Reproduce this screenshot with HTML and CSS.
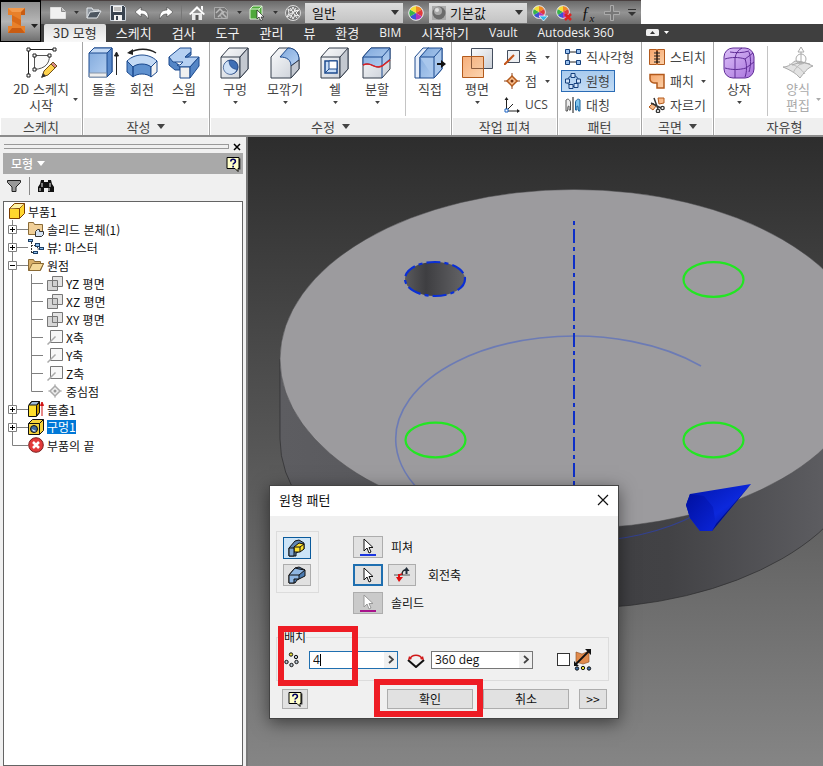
FILE: index.html
```html
<!DOCTYPE html>
<html lang="ko">
<head>
<meta charset="utf-8">
<title>부품1</title>
<link rel="stylesheet" href="styles.css">
</head>
<body>
<svg class="defs" aria-hidden="true">
  <defs>
    <linearGradient id="blue" x1="0" y1="0" x2="1" y2="1"><stop offset="0" stop-color="#7fa8dc"/><stop offset="1" stop-color="#b9d3f3"/></linearGradient>
    <linearGradient id="grey" x1="0" y1="0" x2="1" y2="1"><stop offset="0" stop-color="#fafbfc"/><stop offset="1" stop-color="#c9ced6"/></linearGradient>
    <linearGradient id="orange" x1="0" y1="0" x2="1" y2="1"><stop offset="0" stop-color="#f6a66c"/><stop offset="1" stop-color="#fbd0a8"/></linearGradient>
    <linearGradient id="purple" x1="0" y1="0" x2="1" y2="1"><stop offset="0" stop-color="#dcc0f8"/><stop offset="1" stop-color="#a872dc"/></linearGradient>
    <symbol id="caret" viewBox="0 0 8 5"><path d="M0 0h8L4 5z" fill="currentColor"/></symbol>
    <symbol id="wheel" viewBox="0 0 16 16">
      <circle cx="8" cy="8" r="7.500" fill="#eee"/>
      <path d="M8 8V1A7 7 0 0 1 14 4.500z" fill="#f08a24"/><path d="M8 8l6-3.500a7 7 0 0 1 0 7z" fill="#e03a3a"/><path d="M8 8l6 3.500A7 7 0 0 1 8 15z" fill="#b336b8"/><path d="M8 8v7a7 7 0 0 1-6-3.500z" fill="#3d55d6"/><path d="M8 8l-6 3.500a7 7 0 0 1 0-7z" fill="#39b54a"/><path d="M8 8L2 4.500A7 7 0 0 1 8 1z" fill="#f3df3a"/>
      <circle cx="8" cy="8" r="7.300" fill="none" stroke="#ddd"/>
    </symbol>
    <symbol id="help" viewBox="0 0 16 16"><path d="M2 1.500h12v11h-1v3l-3-3H2z" fill="#ffffc8" stroke="#000"/><path d="M14.800 2.500v11" stroke="#000"/><path d="M5.800 5.500c0-3 4.600-3 4.600 0 0 1.600-2.300 1.600-2.300 3M8.100 9.800v1.700" fill="none" stroke="#000060" stroke-width="1.600"/></symbol>
    <symbol id="cursor" viewBox="0 0 12 16"><path d="M2 1v12l3-3 2 5 2-1-2-4.500h4z" fill="#fff" stroke="currentColor"/></symbol>
    <symbol id="plane" viewBox="0 0 16 16"><path d="M5.500 1.500h10v10h-10z" fill="#e4e4e4" stroke="#777"/><path d="M.5 5.500h10v10H.5z" fill="#ccc" fill-opacity=".8" stroke="#777"/><path d="M5.500 5v6.500H11" fill="none" stroke="#777"/></symbol>
    <symbol id="axis" viewBox="0 0 16 16"><path d="M3.500 1.500h12v12h-12z" fill="#f7f7f7" stroke="#777"/><path d="M.5 15.500l8-8" stroke="#aaa" stroke-width="1.500"/></symbol>
    <symbol id="folder" viewBox="0 0 16 16"><path d="M.5 13.500v-11h5l1 2h6v2h3l-3 7z" fill="#d9b06a" stroke="#8a6a35"/><path d="M.8 13.500l3.500-7h11.200l-3.500 7z" fill="#f4d898" stroke="#8a6a35"/></symbol>
    <symbol id="plus" viewBox="0 0 24 18"><path d="M8.500 0v18M8 9.500h16" stroke="#808080"/><path d="M4.500 5.500h8v8h-8z" fill="#fff" stroke="#808080"/><path d="M6 9.500h5M8.500 7v5" stroke="#000"/></symbol>
    <symbol id="minus" viewBox="0 0 24 18"><path d="M8.500 0v18M8 9.500h16" stroke="#808080"/><path d="M4.500 5.500h8v8h-8z" fill="#fff" stroke="#808080"/><path d="M6 9.500h5" stroke="#000"/></symbol>
    <symbol id="last" viewBox="0 0 24 18"><path d="M8.500 0v9.500H24" fill="none" stroke="#808080"/></symbol>
    <symbol id="pass" viewBox="0 0 24 18"><path d="M8.500 0v18" stroke="#808080"/></symbol>
    <symbol id="sub" viewBox="0 0 19 18"><path d="M3.500 0v18M3 9.500h12" stroke="#808080"/></symbol>
    <symbol id="sublast" viewBox="0 0 19 18"><path d="M3.500 0v9.500H15" fill="none" stroke="#808080"/></symbol>
  </defs>
</svg>

<div class="app">
  <header class="chrome">
    <button class="app-button" aria-label="응용프로그램 메뉴">
      <svg width="38" height="30" viewBox="0 0 38 30"><path d="M7 1h17v7h-4v11h4v7H7v-7h4V8H7z" fill="#e8802a"/><path d="M7 1l4 4h9l4-4z" fill="#f29a4c"/><path d="M11 8l9 5v6l-9-5z" fill="#d96a18"/><path d="M7 26l4-5h9l4 5zM20 5l4-4v7h-4z" fill="#c95c12"/><path d="M30 17h7l-3.500 4z" fill="#222"/></svg>
    </button>
    <div class="qat-row">
      <div class="qat">
        <div class="qat-group">
          <button aria-label="새로 만들기"><svg width="16" height="16" viewBox="0 0 16 16"><path d="M.5 2.500h11l4 4v7H.5z" fill="#f0f0f0" stroke="#ddd"/><path d="M11.500 2.500v4h4" fill="#bbb" stroke="#888"/></svg></button>
          <svg class="mini" width="5" height="3"><use href="#caret"/></svg>
          <button aria-label="열기"><svg width="16" height="16" viewBox="0 0 16 16"><path d="M1 13V3h5l1 2h6v3" fill="#8d949c" stroke="#e4e8ec"/><path d="M1 13l3-6 11-1-4 7z" fill="#4d5660" stroke="#e4e8ec"/></svg></button>
          <button aria-label="저장"><svg width="16" height="16" viewBox="0 0 16 16"><path d="M.5.5h13l2 2v13H.5z" fill="#38424e" stroke="#cfd6de"/><path d="M3 1h9v6H3zM4 10h8v6H4z" fill="#f2f2f2"/><path d="M4 3h7M4 5h7" stroke="#888"/><path d="M6 11h2v4H6z" fill="#38424e"/></svg></button>
          <button aria-label="명령취소"><svg width="16" height="16" viewBox="0 0 16 16"><path d="M1 7l6-5v3c5 0 8 3 7 9-2-4-4-5-7-5v3z" fill="#fff" stroke="#444" stroke-width=".6"/></svg></button>
          <button aria-label="명령복구"><svg width="16" height="16" viewBox="0 0 16 16"><path d="M15 7L9 2v3C4 5 1 8 2 14c2-4 4-5 7-5v3z" fill="#fff" stroke="#444" stroke-width=".6"/></svg></button>
        </div>
        <div class="qat-group divided">
          <button aria-label="홈"><svg width="16" height="16" viewBox="0 0 16 16"><path d="M3 8h10v7H3z" fill="#e9e9e9"/><path d="M0 9l8-8 8 8-1.500 1L8 4 1.500 10zM12 1h2v5l-2-2z" fill="#fff"/><path d="M6.500 10h3v5h-3z" fill="#555"/></svg></button>
          <button aria-label="업데이트"><svg width="16" height="16" viewBox="0 0 16 16"><path d="M1.500 2.500h10l3 3v8h-13z" fill="#777" stroke="#aaa"/><path d="M3 8l4-4 4 4M5 12l4-4 4 4" fill="none" stroke="#bbb" stroke-width="1.500"/><circle cx="11" cy="10" r="3.500" fill="none" stroke="#b5b5b5"/></svg></button>
          <svg class="mini" width="5" height="3"><use href="#caret"/></svg>
          <button aria-label="선택"><svg width="16" height="16" viewBox="0 0 16 16"><path d="M1 4l3-3h9v10l-3 3H1z" fill="#4fa83b" stroke="#ddf5d5"/><path d="M1 4h9v10M10 4l3-3" fill="none" stroke="#ddf5d5"/><path d="M8 5v9l2-2 2 4 1.500-1-1.500-3h3z" fill="#fff" stroke="#222" stroke-width=".7"/></svg></button>
          <svg class="mini" width="5" height="3"><use href="#caret"/></svg>
          <button aria-label="재질"><svg width="16" height="16" viewBox="0 0 16 16"><circle cx="8" cy="8" r="7.500" fill="#777" stroke="#ddd"/><path d="M3 4l3 2 2-4 2 4 4-1-3 3 3 3-4-1-2 4-2-4-4 2 2-4zM3 10l10-5M5 13l6-10M5 3l7 10" fill="none" stroke="#f2f2f2"/></svg></button>
        </div>
        <div class="qat-group tight">
          <label class="combo"><select aria-label="재질"><option>일반</option></select><svg width="8" height="5"><use href="#caret"/></svg></label>
          <button aria-label="모양"><svg width="16" height="16"><use href="#wheel"/></svg></button>
          <label class="combo swatch"><svg class="ball" width="14" height="14" viewBox="0 0 14 14"><path d="M0 0h14v14H0z" fill="#aaa"/><circle cx="7" cy="7" r="6.500" fill="#6b6b6b"/><circle cx="6" cy="5" r="4" fill="#a8a8a8"/><circle cx="5" cy="4" r="2" fill="#ddd"/></svg><select aria-label="모양"><option>기본값</option></select><svg width="8" height="5"><use href="#caret"/></svg></label>
          <button aria-label="조정"><svg width="16" height="16" viewBox="0 0 16 16"><use href="#wheel" width="14" height="14"/><path d="M7 11h9l-4.500 5z" fill="#35b6e8" stroke="#fff" stroke-width=".7"/></svg></button>
        </div>
        <div class="qat-group end">
          <button aria-label="모양 지우기"><svg width="16" height="16" viewBox="0 0 16 16"><use href="#wheel" width="14" height="14"/><path d="M9 9l6 6M15 9l-6 6" stroke="#d22" stroke-width="2.500"/></svg></button>
          <button class="fx" aria-label="매개변수">ƒ<sub>x</sub></button>
          <button aria-label="추가"><svg width="16" height="16" viewBox="0 0 16 16"><path d="M6.500.5h3v6h6v3h-6v6h-3v-6h-6v-3h6z" fill="#777" stroke="#aaa"/></svg></button>
          <button class="more" aria-label="사용자화"><svg width="8" height="8" viewBox="0 0 8 8"><path d="M0 0h8v1H0zM0 3h8L4 7z" fill="#333"/></svg></button>
        </div>
      </div>
    </div>
    <nav class="tabs">
      <a class="tab active" href="#">3D 모형</a><a class="tab" href="#">스케치</a><a class="tab" href="#">검사</a><a class="tab" href="#">도구</a><a class="tab" href="#">관리</a><a class="tab" href="#">뷰</a><a class="tab" href="#">환경</a><a class="tab latin" href="#">BIM</a><a class="tab" href="#">시작하기</a><a class="tab latin" href="#">Vault</a><a class="tab latin" href="#">Autodesk 360</a>
      <button class="collapse" aria-label="리본 최소화"><svg width="24" height="8" viewBox="0 0 24 8"><rect width="13" height="7" rx="1.500" fill="#eee"/><path d="M4 5h5L6.500 2z" fill="#333"/><path d="M18 2h5l-2.500 3z" fill="#fff"/></svg></button>
    </nav>
  </header>

  <section class="ribbon">
    <div class="panel p-sketch">
      <div class="tools">
        <button class="big split wide"><svg width="32" height="32" viewBox="0 0 32 32"><path d="M3.500 2.500v26M3.500 2.500h26" stroke="#222"/><path d="M9.500 8.500h15c0 8-4 13-15 14z" fill="#fafafa" stroke="#555"/><path d="M2 1h3v3H2zM28 1h3v3h-3zM2 27h3v3H2zM8 7h3v3H8zM23 7h3v3h-3zM8 21h3v3H8z" fill="#fff" stroke="#222"/><path d="M17 30l2-6 9-9 4 4-9 9z" fill="#ffd34d" stroke="#70501c"/><path d="M26 17l2-2 4 4-2 2z" fill="#d98a8a" stroke="#70501c"/><path d="M16 31l2-5 3 3z" fill="#333"/></svg><span>2D 스케치</span><span class="second">시작</span><svg class="side" width="5" height="3"><use href="#caret"/></svg></button>
      </div>
      <h2>스케치</h2>
    </div>
    <div class="panel p-create">
      <div class="tools">
        <button class="big m"><svg width="32" height="32" viewBox="0 0 32 32"><path d="M1 6l5-5h18v24l-5 5H1z" fill="url(#blue)" stroke="#1d4b8f"/><path d="M1 6l5-5h18l-5 5z" fill="#c4daf5" stroke="#1d4b8f"/><path d="M19 6l5-5v24l-5 5z" fill="#5a8acb" stroke="#1d4b8f"/><path d="M1.500 26h17v4h-17z" fill="#eee" stroke="#8795a8"/><path d="M28.500 28V7M26.500 9l2-4 2 4z" fill="#222" stroke="#222"/></svg><span>돌출</span></button>
        <button class="big s"><svg width="32" height="32" viewBox="0 0 32 32"><path d="M1 14c8-8 22-8 30 0l-6 6c-4-3-14-3-18 0z" fill="#c4daf5" stroke="#1d4b8f"/><path d="M1 14l6 6v10l-6-5zM7 20c4-4 14-4 18 0v10c-4-4-14-4-18 0z" fill="#5f91cf" stroke="#1d4b8f"/><path d="M31 14l-6 6v10l6-5z" fill="#f2f2f2" stroke="#1d4b8f"/><path d="M3 6c8-5 20-5 27 0" fill="none" stroke="#222" stroke-width="1.500"/><path d="M1 6l6-4v6z" fill="#222"/></svg><span>회전</span></button>
        <button class="big l"><svg width="32" height="32" viewBox="0 0 32 32"><path d="M1 10v8l6 5h5v-4z" fill="#5586c6" stroke="#1d4b8f"/><path d="M1 10L12 1h11v4l-6 5h14L22 20H12l-3-2h3l3-3H5z" fill="#b5d0f2" stroke="#1d4b8f"/><path d="M23 5v3l-3 2h-3z" fill="#5586c6" stroke="#1d4b8f"/><path d="M12 20h10v11H12z" fill="#f0f0f0" stroke="#1d4b8f"/><path d="M22 20l9-10v9l-9 12z" fill="#5586c6" stroke="#1d4b8f"/></svg><span>스윕</span><svg class="down" width="5" height="3"><use href="#caret"/></svg></button>
      </div>
      <h2>작성 <svg width="8" height="5"><use href="#caret"/></svg></h2>
    </div>
    <div class="panel p-modify">
      <div class="tools">
        <button class="big l"><svg width="32" height="32" viewBox="0 0 32 32"><path d="M2 10l8-9h19v21l-8 9H2z" fill="url(#grey)" stroke="#333c4a"/><path d="M2 10h19v21M21 10l8-9" fill="none" stroke="#333c4a"/><path d="M21 10l8-9v21l-8 9z" fill="#c3c8d0" stroke="#333c4a"/><circle cx="12" cy="20" r="7" fill="#3f6fb5" stroke="#1d3f7c"/><path d="M10 13.500a7 7 0 1 0 8 9C13 22 10 19 10 13.500z" fill="#cfe1f7" stroke="#1d3f7c" stroke-width=".6"/></svg><span>구멍</span><svg class="down" width="5" height="3"><use href="#caret"/></svg></button>
        <button class="big xl"><svg width="32" height="32" viewBox="0 0 32 32"><path d="M2 10l8-9h9c7 0 11 5 11 12v9l-8 9H2z" fill="url(#grey)" stroke="#333c4a"/><path d="M11 10l8-9c7 0 11 5 11 12l-8 6c0-6-4-9-11-9z" fill="url(#blue)" stroke="#1d4b8f"/><path d="M22 19v12l8-9v-9z" fill="#c3c8d0" stroke="#333c4a"/></svg><span>모깎기</span><svg class="down" width="5" height="3"><use href="#caret"/></svg></button>
        <button class="big l"><svg width="32" height="32" viewBox="0 0 32 32"><path d="M2 10l8-9h19v21l-8 9H2z" fill="url(#grey)" stroke="#333c4a"/><path d="M2 10h19v21" fill="none" stroke="#333c4a"/><path d="M21 10l8-9v21l-8 9z" fill="#c3c8d0" stroke="#333c4a"/><path d="M6 14h12v12H6z" fill="#c9def7" stroke="#1d4b8f" stroke-width="1.500"/><path d="M10 14h8v8h-8z" fill="#fff" stroke="#1d4b8f"/><path d="M6 26l4-4" stroke="#1d4b8f"/></svg><span>쉘</span><svg class="down" width="5" height="3"><use href="#caret"/></svg></button>
        <button class="big s"><svg width="32" height="32" viewBox="0 0 32 32"><path d="M2 10l8-9h19v21l-8 9H2z" fill="url(#grey)" stroke="#333c4a"/><path d="M2 10l8-9h19v11l-8 7c-8 4-10-5-19-1z" fill="url(#blue)" stroke="#1d4b8f"/><path d="M2 10h19v21M21 10l8-9" fill="none" stroke="#1d4b8f"/><path d="M2 18c9-4 11 5 19 1l8-6" fill="none" stroke="#e02020" stroke-width="1.500"/></svg><span>분할</span><svg class="down" width="5" height="3"><use href="#caret"/></svg></button>
        <i class="rule"></i>
        <button class="big m"><svg width="32" height="32" viewBox="0 0 32 32"><path d="M1 10l8-9h6L6 10v21H1z" fill="#e8effa" stroke="#1d4b8f"/><path d="M6 10l8-9h14v21l-8 9H6z" fill="url(#blue)" stroke="#1d4b8f"/><path d="M6 10h14v21M20 10l8-9v21l-8 9" fill="#a9c7ec" stroke="#1d4b8f"/><path d="M23 17h6" stroke="#111" stroke-width="2"/><path d="M27 13l5 4-5 4z" fill="#111"/></svg><span>직접</span></button>
      </div>
      <h2>수정 <svg width="8" height="5"><use href="#caret"/></svg></h2>
    </div>
    <div class="panel p-work">
      <div class="tools">
        <button class="big l"><svg width="32" height="32" viewBox="0 0 32 32"><path d="M10.500 1.500h21v20h-21z" fill="url(#grey)" stroke="#444e5e"/><path d="M1.500 9.500h21v21h-21z" fill="url(#orange)" fill-opacity=".9" stroke="#b35a1c"/><path d="M10.500 9.500v12h12" fill="none" stroke="#8a5a3c"/></svg><span>평면</span><svg class="down" width="5" height="3"><use href="#caret"/></svg></button>
        <div class="stack">
          <button class="row"><svg width="16" height="16" viewBox="0 0 16 16"><path d="M3.500 1.500h12v12h-12z" fill="#eef0f3" stroke="#444e5e"/><path d="M0 16L10 6" stroke="#c4561b" stroke-width="2"/></svg><span>축</span><svg class="end-caret" width="5" height="3"><use href="#caret"/></svg></button>
          <button class="row"><svg width="16" height="16" viewBox="0 0 16 16"><path d="M8 0v16M0 8h16" stroke="#8f4216"/><path d="M8 3l5 5-5 5-5-5z" fill="#fbc08f" stroke="#b35a1c" stroke-width="1.500"/><circle cx="8" cy="8" r="1.500" fill="#7a3410"/></svg><span>점</span><svg class="end-caret" width="5" height="3"><use href="#caret"/></svg></button>
          <button class="row latin"><svg width="16" height="16" viewBox="0 0 16 16"><path d="M2.500 2v12H15M2 14L9 7" fill="none" stroke="#222"/><path d="M.5 3l2-3 2 3zM13 12l3 2-3 2z" fill="#222"/><path d="M1 12h3v3H1z" fill="#fff" stroke="#1b62c4"/></svg><span>UCS</span></button>
        </div>
      </div>
      <h2>작업 피쳐</h2>
    </div>
    <div class="panel p-pattern">
      <div class="tools">
        <div class="stack">
          <button class="row"><svg width="16" height="16" viewBox="0 0 16 16"><path d="M3 3h10M3 3v10h10" fill="none" stroke="#222"/><path d="M.5.5h4v4h-4zM11.500.5h4v4h-4zM.5 11.500h4v4h-4zM11.500 11.500h4v4h-4z" fill="#9cc2ee" stroke="#15407c"/></svg><span>직사각형</span></button>
          <button class="row on"><svg width="16" height="16" viewBox="0 0 16 16"><circle cx="8" cy="8" r="5.500" fill="none" stroke="#15407c"/><path d="M6 .5h4v4H6zM.5 6h4v4h-4zM11.500 6h4v4h-4zM4 11.500h4v4H4zM9 10.500h4v4H9z" fill="#cfe2f8" stroke="#15407c"/></svg><span>원형</span></button>
          <button class="row"><svg width="16" height="16" viewBox="0 0 16 16"><path d="M8 0v16" stroke="#111"/><path d="M1 3c2-2 4 0 4.500 2v8H4V9c-1 0-1.500 1-1.500 5H1z" fill="#eee" stroke="#555"/><path d="M15 3c-2-2-4 0-4.500 2v8H12V9c1 0 1.500 1 1.500 5H15z" fill="#7fc4ee" stroke="#15609c"/></svg><span>대칭</span></button>
        </div>
      </div>
      <h2>패턴</h2>
    </div>
    <div class="panel p-surface">
      <div class="tools">
        <div class="stack">
          <button class="row"><svg width="16" height="16" viewBox="0 0 16 16"><path d="M.5.500h7v15h-7zM8.500.5h7v15h-7z" fill="url(#orange)" stroke="#b35a1c"/><path d="M8 2v12M5 4h6M5 7h6M5 10h6M5 13h6" stroke="#222"/></svg><span>스티치</span></button>
          <button class="row"><svg width="16" height="16" viewBox="0 0 16 16"><path d="M1 1.500h14v13.500H8V10H5c-2 0-4-2-4-4z" fill="url(#orange)" stroke="#b35a1c" stroke-width="1.500"/></svg><span>패치</span><svg class="end-caret" width="5" height="3"><use href="#caret"/></svg></button>
          <button class="row"><svg width="16" height="16" viewBox="0 0 16 16"><path d="M0 10l4-4 3 3-3 4zM9 1h6v5l-5 1z" fill="url(#orange)" stroke="#b35a1c"/><path d="M5 1l4 11M2 6l10 5" stroke="#333" stroke-width="1.500"/><circle cx="9" cy="14" r="1.700" fill="none" stroke="#333" stroke-width="1.300"/><circle cx="13.500" cy="11" r="1.700" fill="none" stroke="#333" stroke-width="1.300"/></svg><span>자르기</span></button>
        </div>
      </div>
      <h2>곡면 <svg width="8" height="5"><use href="#caret"/></svg></h2>
    </div>
    <div class="panel p-free">
      <div class="tools">
        <button class="big l"><svg width="32" height="32" viewBox="0 0 32 32"><rect x="1" y="1" width="30" height="30" rx="9" fill="url(#purple)" stroke="#5f2c96"/><path d="M2 12c6-2 14-2 20 0 2 5 2 13 0 18M22 12l8-6M12 11v20M12 11c1-5 3-8 7-10M2 21c7 2 14 2 21 0l8-6M7 5c6 1 13 1 19-1M26 5c2 6 2 13 0 20" fill="none" stroke="#5f2c96"/></svg><span>상자</span><svg class="down" width="5" height="3"><use href="#caret"/></svg></button>
        <i class="rule"></i>
        <button class="big split free" disabled><svg width="32" height="32" viewBox="0 0 32 32"><path d="M1 20c6 0 9-4 12-6 5 0 12 2 18 5-6 2-9 7-13 12-4-5-10-8-17-11z" fill="#e2e2e2" stroke="#aaa"/><path d="M7 17c8 1 12 5 16 10M21 15c-4 3-8 6-10 11" fill="none" stroke="#bbb"/><path d="M19 16V4M19 15l-9 3M19 15l9 2" stroke="#aaa"/><circle cx="19" cy="12" r="5" fill="none" stroke="#aaa"/><path d="M16 5l3-5 3 5z" fill="#fff" stroke="#aaa"/></svg><span>양식</span><span class="second">편집</span><svg class="side" width="5" height="3"><use href="#caret"/></svg></button>
      </div>
      <h2>자유형</h2>
    </div>
  </section>

  <main class="work">
    <aside class="browser">
      <div class="grip"><i></i><button aria-label="닫기"><svg width="8" height="8" viewBox="0 0 8 8"><path d="M1 1l6 6M7 1L1 7" stroke="#000" stroke-width="1.500"/></svg></button></div>
      <div class="browser-title"><button>모형 <svg width="8" height="5"><use href="#caret"/></svg></button><button aria-label="도움말"><svg width="16" height="16"><use href="#help"/></svg></button></div>
      <div class="browser-tools">
        <button aria-label="필터"><svg width="14" height="12" viewBox="0 0 14 12"><path d="M.5.5h13v2L9 7v4.500H5V7L.5 2.500z" fill="#999" stroke="#222"/></svg></button><i></i>
        <button aria-label="찾기"><svg width="16" height="14" viewBox="0 0 16 14"><path d="M3 1h3v2h4V1h3l1 4 2 3v5h-6V9H6v4H0V8l2-3z" fill="#111"/><path d="M4 4v4M2 9v3M12 4v4M11 9v3" stroke="#eee"/></svg></button>
      </div>
      <ul class="tree">
        <li class="root"><svg width="16" height="16" viewBox="0 0 16 16"><path d="M.5 5.500l5-5h10v10l-5 5H.5z" fill="#ffd62e" stroke="#7a3d00"/><path d="M.5 5.500h10v10M10.500 5.500l5-5" fill="none" stroke="#7a3d00"/><path d="M1 5.500L6 1h9l-4.500 4z" fill="#fff3a8"/></svg><span>부품1</span></li>
        <li><svg width="24" height="18"><use href="#plus"/></svg><svg width="16" height="16" viewBox="0 0 16 16"><path d="M.5 13.500v-12h5l1 2h8v10z" fill="#f0cf98" stroke="#8a6a35"/><path d="M7.500 10.500l2-2h2v2h4v3l-2 2h-6z" fill="#d5e3f3" stroke="#333"/></svg><span>솔리드 본체(1)</span></li>
        <li><svg width="24" height="18"><use href="#plus"/></svg><svg width="16" height="16" viewBox="0 0 16 16"><path d="M3.500 3v10M3 6.500h5M3 13.500h3M9.500 7v3h3" fill="none" stroke="#333" stroke-dasharray="2 1"/><path d="M0 0h5v3H0zM7 4h5v4H7zM11 8h5v3h-5zM5 12h5v3H5z" fill="#1d3f66"/><path d="M1 1h3v1H1zM8 5h3v2H8zM12 9h3v1h-3zM6 13h3v1H6z" fill="#8fc0ee"/></svg><span>뷰: 마스터</span></li>
        <li><svg width="24" height="18"><use href="#minus"/></svg><svg width="16" height="16"><use href="#folder"/></svg><span>원점</span></li>
        <li><svg width="24" height="18"><use href="#pass"/></svg><svg width="19" height="18"><use href="#sub"/></svg><svg width="16" height="16"><use href="#plane"/></svg><span>YZ 평면</span></li>
        <li><svg width="24" height="18"><use href="#pass"/></svg><svg width="19" height="18"><use href="#sub"/></svg><svg width="16" height="16"><use href="#plane"/></svg><span>XZ 평면</span></li>
        <li><svg width="24" height="18"><use href="#pass"/></svg><svg width="19" height="18"><use href="#sub"/></svg><svg width="16" height="16"><use href="#plane"/></svg><span>XY 평면</span></li>
        <li><svg width="24" height="18"><use href="#pass"/></svg><svg width="19" height="18"><use href="#sub"/></svg><svg width="16" height="16"><use href="#axis"/></svg><span>X축</span></li>
        <li><svg width="24" height="18"><use href="#pass"/></svg><svg width="19" height="18"><use href="#sub"/></svg><svg width="16" height="16"><use href="#axis"/></svg><span>Y축</span></li>
        <li><svg width="24" height="18"><use href="#pass"/></svg><svg width="19" height="18"><use href="#sub"/></svg><svg width="16" height="16"><use href="#axis"/></svg><span>Z축</span></li>
        <li><svg width="24" height="18"><use href="#pass"/></svg><svg width="19" height="18"><use href="#sublast"/></svg><svg width="16" height="16" viewBox="0 0 16 16"><path d="M8 1v14M1 8h14" stroke="#bbb"/><path d="M8 3l5 5-5 5-5-5z" fill="#eee" stroke="#aaa" stroke-width="1.500"/><circle cx="8" cy="8" r="1.500" fill="#999"/></svg><span>중심점</span></li>
        <li><svg width="24" height="18"><use href="#plus"/></svg><svg width="16" height="16" viewBox="0 0 16 16"><path d="M.5 4.500l3-4h8v11l-3 4h-8z" fill="#ffe02e" stroke="#111"/><path d="M1 4l3-3.500h7.500L8.500 4z" fill="#9fbcd8" stroke="#111"/><path d="M8.500 4.500l3-3v10l-3 3.500z" fill="#c89a00" stroke="#111"/><path d="M14 15V3M12.500 4.500L14 1l1.500 3.500z" fill="#d01010" stroke="#d01010"/></svg><span>돌출1</span></li>
        <li><svg width="24" height="18"><use href="#plus"/></svg><svg width="16" height="16" viewBox="0 0 16 16"><path d="M.5 4.500l4-4h11v11l-4 4H.5z" fill="#f6d33c" stroke="#111"/><path d="M.5 4.500h11v11M11.500 4.500l4-4" fill="none" stroke="#111"/><circle cx="6" cy="10" r="3.500" fill="#3f6a9c" stroke="#111"/><path d="M4 10a2.500 2.500 0 0 0 4 2z" fill="#dceaf8"/></svg><span class="selected">구멍1</span></li>
        <li><svg width="24" height="18"><use href="#last"/></svg><svg width="16" height="16" viewBox="0 0 16 16"><circle cx="8" cy="8" r="7.300" fill="#e23a3a" stroke="#7c2020"/><path d="M5 5l6 6M11 5l-6 6" stroke="#fff" stroke-width="2.500"/></svg><span>부품의 끝</span></li>
      </ul>
    </aside>

    <section class="viewport">
      <svg class="scene" viewBox="248 137 575 629" preserveAspectRatio="xMinYMin slice" role="img" aria-label="원형 부품">
        <defs>
          <linearGradient id="sky" x1="0" y1="0" x2="0" y2="1"><stop offset="0" stop-color="#2d2d2d"/><stop offset=".5" stop-color="#575757"/><stop offset="1" stop-color="#858585"/></linearGradient>
          <linearGradient id="wall" gradientUnits="userSpaceOnUse" x1="280" y1="0" x2="868" y2="0"><stop offset="0" stop-color="#5d5d61"/><stop offset=".15" stop-color="#5a5a5e"/><stop offset=".45" stop-color="#3f3f42"/><stop offset=".66" stop-color="#424245"/><stop offset=".92" stop-color="#5c5c60"/><stop offset="1" stop-color="#5c5c60"/></linearGradient>
          <linearGradient id="bore"><stop offset="0" stop-color="#5a5a5d"/><stop offset=".35" stop-color="#3e3e41"/><stop offset="1" stop-color="#646467"/></linearGradient>
          <linearGradient id="mouth" x1="0" y1="0" x2="1" y2="1"><stop offset="0" stop-color="#0010a0"/><stop offset="1" stop-color="#0a24d8"/></linearGradient>
          <linearGradient id="flank" x1="0" y1="0" x2="1" y2="1"><stop offset="0" stop-color="#0014a8"/><stop offset=".55" stop-color="#0c28dc"/><stop offset="1" stop-color="#000f80"/></linearGradient>
        </defs>
        <path d="M248 137h575v629H248z" fill="url(#sky)"/>
        <path d="M280 359v80a294 169.500 0 0 0 588 0v-80z" fill="url(#wall)" stroke="#2c2c2e" stroke-width=".7"/>
        <ellipse cx="574" cy="359" rx="294" ry="169.500" fill="#9c9b9e" stroke="#4a4a4c" stroke-width=".5"/>
        <path d="M701 366A179 103 0 1 0 574 542" fill="none" stroke="#6c7bb5" stroke-width="1.600"/>
        <path d="M574 542A179 103 0 0 0 697 514" fill="none" stroke="#33418f" stroke-width="1.200"/>
        <ellipse cx="435" cy="279" rx="30" ry="17" fill="url(#bore)" stroke="#0a2fd6" stroke-width="2.200" stroke-dasharray="14 4 4 4"/>
        <g fill="none" stroke="#22e622" stroke-width="2.200"><ellipse cx="713.500" cy="279.500" rx="30" ry="17.300"/><ellipse cx="435.500" cy="440" rx="30" ry="17.300"/><ellipse cx="713.500" cy="440" rx="30" ry="17.300"/></g>
        <path d="M574 221v320" stroke="#0d2fc8" stroke-width="2" stroke-dasharray="4 4 14 4"/>
        <path d="M690 494l61-10-39 47-12 0-10-13-4-13z" fill="url(#flank)"/>
        <path d="M690 494l14 2 9 11 3 18-4 6h-12l-10-13-4-13z" fill="url(#mouth)"/>
        <path d="M716 524l35-40-39 47z" fill="#000f88"/>
      </svg>

      <form class="dialog" role="dialog" aria-labelledby="dlg-title">
        <div class="dialog-head"><h1 id="dlg-title">원형 패턴</h1><button type="button" aria-label="닫기"><svg width="12" height="12" viewBox="0 0 12 12"><path d="M1 1l10 10M11 1L1 11" stroke="#111" stroke-width="1.200"/></svg></button></div>
        <div class="dialog-body">
          <div class="picks">
            <div class="modes">
              <button type="button" class="pick current" aria-label="개별 피쳐 패턴화"><svg width="18" height="18" viewBox="0 0 18 18"><path d="M1 9l6-7 4-1 5 3v6l-8 4v3H1z" fill="#5f86b4" stroke="#111"/><path d="M6 8l5-4 5 1v5l-4 3H6z" fill="#ffe22e" stroke="#111"/><path d="M6 8h6v5M12 8l4-3" fill="none" stroke="#111"/><path d="M1 9h5v8H1z" fill="#7fa6d2" stroke="#111"/></svg></button>
              <button type="button" class="pick" aria-label="솔리드 패턴화"><svg width="18" height="18" viewBox="0 0 18 18"><path d="M1 9l6-7 4-1 6 3v6l-8 4-2 3H1z" fill="#4a7ab0" stroke="#111"/><path d="M1 9l6-7 4 1 6 1-6 5v4H6v4H1z" fill="#8fb6e2" stroke="#111"/><path d="M1 9h10" stroke="#111"/></svg></button>
            </div>
            <div class="selectors">
              <div class="line"><button type="button" class="pick" id="feat"><svg width="12" height="16"><use href="#cursor"/></svg><i></i></button><label for="feat">피쳐</label></div>
              <div class="line"><button type="button" class="pick focus" id="axisb" aria-label="회전축 선택"><svg width="12" height="16"><use href="#cursor"/></svg></button><button type="button" class="pick flip" aria-label="반전"><svg width="16" height="16" viewBox="0 0 16 16"><path d="M0 8h9M9 8h7" stroke="#555"/><path d="M8 8c0-4 1-5 4-5" fill="none" stroke="#222" stroke-width="1.500"/><path d="M9.500 4L12.500 0l3 4h-2v3h-2V4z" fill="#222e3a"/><path d="M2 10h2V7h2v3h3l-4 5z" fill="#e01010"/><path d="M5 8l3-1" stroke="#e01010" stroke-width="1.500"/></svg></button><label for="axisb">회전축</label></div>
              <div class="line"><button type="button" class="pick off" id="solid" disabled><svg width="12" height="16"><use href="#cursor"/></svg><i></i></button><label for="solid">솔리드</label></div>
            </div>
          </div>
          <fieldset>
            <legend>배치</legend>
            <svg width="16" height="16" viewBox="0 0 16 16"><g fill="#b9c6d2" stroke="#111"><circle cx="7" cy="2.500" r="1.700" fill="#e8e23c"/><circle cx="12" cy="5" r="1.700"/><circle cx="12.500" cy="10" r="1.700"/><circle cx="7.500" cy="13" r="1.700"/><circle cx="2.500" cy="10" r="1.700"/></g></svg>
            <div class="field count"><input aria-label="배치 개수" value="4"><button type="button" aria-label="개수 옵션"><svg width="6" height="9" viewBox="0 0 6 9"><path d="M1 1l4 3.500L1 8" fill="none" stroke="#444" stroke-width="1.800"/></svg></button></div>
            <svg class="angle" width="18" height="16" viewBox="0 0 18 16"><path d="M1 8l8 7 8-7" fill="none" stroke="#111" stroke-width="2"/><path d="M3 7c2-5 10-5 12 0" fill="none" stroke="#d01818" stroke-width="1.500"/><path d="M1 8l1-4 3 3zM17 8l-1-4-3 3z" fill="#d01818"/></svg>
            <div class="field degrees"><input aria-label="배치 각도" value="360 deg"><button type="button" aria-label="각도 옵션"><svg width="6" height="9" viewBox="0 0 6 9"><path d="M1 1l4 3.500L1 8" fill="none" stroke="#444" stroke-width="1.800"/></svg></button></div>
            <label class="mid"><input type="checkbox" aria-label="중간평면"><svg width="18" height="22" viewBox="0 0 18 22"><path d="M2 3l6 2 7-3v11l-6 2-7-2z" fill="#e08a4c" stroke="#8a4a1c" stroke-width=".6"/><path d="M2 15L15 2" stroke="#111" stroke-width="1.800"/><path d="M17 0v6l-6-6zM0 17v-5l5 5z" fill="#111"/><circle cx="3" cy="19.500" r="1.700" fill="#3a6ea8" stroke="#111"/><circle cx="9" cy="19" r="1.700" fill="#e8e23c" stroke="#111"/><circle cx="15" cy="19.500" r="1.700" fill="#3a6ea8" stroke="#111"/></svg></label>
          </fieldset>
          <div class="actions">
            <button type="button" class="help" aria-label="도움말"><svg width="16" height="16"><use href="#help"/></svg></button>
            <button type="button" class="cmd">확인</button>
            <button type="button" class="cmd">취소</button>
            <button type="button" class="expand">&gt;&gt;</button>
          </div>
        </div>
        <i class="mark mark-count"></i>
        <i class="mark mark-ok"></i>
      </form>
    </section>
  </main>
</div>
</body>
</html>
```
FILE: styles.css
```css
* { box-sizing: border-box; }

body {
  margin: 0;
  background: #fff;
  color: #222;
  font: 12px/16px "Open Sans", "Noto Sans CJK KR", sans-serif;
}

button {
  margin: 0;
  padding: 0;
  border: 0;
  background: none;
  color: inherit;
  font: inherit;
}

svg { display: block; flex: none; }
i { display: block; }
.defs { position: absolute; width: 0; height: 0; }

.app {
  display: flex;
  flex-direction: column;
  height: 100vh;
  overflow: hidden;
}

/* Title strip and tabs */
.chrome {
  display: grid;
  grid-template: 24px 18px / 41px 1fr;
  flex: none;
  background: #3f3f3f;
}

.app-button {
  grid-row: 1 / 3;
  display: flex;
  align-items: center;
  border: 1px solid #000;
  border-top-width: 2px;
  background: linear-gradient(#8f8f8f, #b5b5b5 50%, #6f6f6f);
}

.qat-row { background: #fff; }

.qat {
  display: flex;
  align-items: center;
  width: 600px;
  height: 24px;
  padding-left: 9px;
  border-top: 1px solid #4a4040;
  background: linear-gradient(#6a6a6a, #939393 50%, #6d6d6d);
  color: #333;
}

.qat-group { display: flex; align-items: center; gap: 8px; }
.qat-group .mini { margin-right: -1px; }
.qat-group.divided { margin-left: 7px; padding-left: 7px; border-left: 1px solid #777; }
.qat-group.tight { gap: 5px; margin-left: 4px; }
.qat-group.end { margin-left: 8px; }

.fx {
  width: 16px;
  color: #111;
  font: italic 16px/16px "Liberation Serif", serif;
  white-space: nowrap;
}
.fx sub { font-size: 11px; line-height: 0; }

.combo {
  display: flex;
  align-items: center;
  width: 98px;
  height: 20px;
  padding: 0 4px 0 7px;
  background: linear-gradient(#dcdcdc, #c4c4c4);
}
.combo.swatch { padding-left: 3px; gap: 4px; }
.combo select {
  flex: 1;
  min-width: 0;
  appearance: none;
  border: 0;
  padding: 0;
  background: none;
  color: #111;
  font: 13px/18px "Noto Sans CJK KR", sans-serif;
}

.tabs { display: flex; align-items: stretch; padding-left: 3px; }
.tab {
  padding: 0 10px;
  color: #f2f2f2;
  font: 13px/17px "Noto Sans CJK KR", sans-serif;
  text-decoration: none;
  white-space: nowrap;
}
.tab.latin { font: 12px/17px "Open Sans", sans-serif; }
.tab.active {
  padding: 0 9px;
  border-radius: 2px 2px 0 0;
  background: linear-gradient(#dedede, #f8f8f8);
  color: #333;
}
.collapse { margin-left: 22px; }

/* Ribbon */
.ribbon {
  display: flex;
  flex: none;
  height: 95px;
  overflow: hidden;
  border-bottom: 2px solid #8c8c8c;
  background: #fff;
  color: #444;
}
.panel {
  display: flex;
  flex-direction: column;
  flex: none;
  padding: 0 1px;
  border-right: 1px solid #a5a5a5;
}
.p-sketch { width: 83px; }
.p-create { width: 127px; }
.p-modify { width: 242px; }
.p-work { width: 106px; }
.p-pattern { width: 84px; }
.p-surface { width: 72px; }
.p-free { flex: 1 0 142px; }
.panel h2 {
  display: flex;
  align-items: center;
  justify-content: center;
  gap: 7px;
  flex: none;
  height: 17px;
  margin: 0;
  background: #efefef;
  font: 13px/16px "Noto Sans CJK KR", sans-serif;
}
.tools { display: flex; flex: 1; min-height: 0; }

.big {
  position: relative;
  display: flex;
  flex-direction: column;
  align-items: center;
  padding-top: 5px;
  font: 13px/16px "Noto Sans CJK KR", sans-serif;
  white-space: nowrap;
}
.big span { margin-top: 2px; }
.big .second { margin-top: 0; }
.big .down { margin-top: 4px; }
.big .side { position: absolute; right: 3px; bottom: 17px; }
.big.s { width: 36px; }
.big.m { width: 40px; }
.big.l { width: 48px; }
.big.xl { width: 52px; }
.big.wide { width: 80px; }
.big.free { width: 52px; color: #aaa; }
.rule { width: 1px; margin: 4px 4px 2px 10px; background: #c4c4c4; }
.p-free .rule { margin-left: 4px; }

.stack { display: flex; flex-direction: column; gap: 2px; padding: 4px 2px 0; flex: 1; }
.row {
  display: flex;
  align-items: center;
  gap: 5px;
  height: 22px;
  padding: 0 3px;
  border: 1px solid transparent;
  font: 13px/18px "Noto Sans CJK KR", sans-serif;
  white-space: nowrap;
}
.row.latin { font: 12px/18px "Open Sans", sans-serif; }
.row.on {
  align-self: flex-start;
  padding-right: 4px;
  border-color: #2b6cb5;
  background: linear-gradient(#a9cbee, #c3dcf5);
}
.end-caret { margin-left: auto; }
.p-work .row { padding-left: 0; }

/* Model browser */
.work { display: flex; flex: 1; min-height: 0; }

.browser {
  display: flex;
  flex-direction: column;
  flex: 0 0 248px;
  padding: 3px 3px 0 3px;
  border-right: 2px solid #777;
  background: #f0f0f0;
}
.grip { display: flex; align-items: center; gap: 4px; flex: none; height: 13px; padding: 0 2px 0 1px; }
.grip i { flex: 1; height: 5px; border: solid #999; border-width: 1px 1px 1px 0; }
.browser-title {
  display: flex;
  align-items: center;
  justify-content: space-between;
  flex: none;
  height: 21px;
  padding: 0 2px 0 8px;
  background: #a9a9a9;
  color: #fff;
}
.browser-title button { display: flex; align-items: center; gap: 4px; font: 500 12px/16px "Noto Sans CJK KR", sans-serif; }
.browser-tools { display: flex; align-items: center; gap: 8px; flex: none; height: 27px; padding: 0 4px 3px; }
.browser-tools i { width: 1px; height: 18px; background: #888; }

.tree {
  flex: 1;
  margin: 0;
  padding: 0;
  overflow: hidden;
  border: 1px solid #646464;
  background: #fff;
  color: #111;
  font: 12px/17px "Noto Sans CJK KR", sans-serif;
  list-style: none;
}
.tree li { display: flex; align-items: center; height: 18px; white-space: nowrap; }
.tree span { margin-left: 3px; }
.tree .root { padding-left: 5px; }
.tree .selected { line-height: 14px; background: #0078d7; color: #fff; }

/* Viewport */
.viewport { position: relative; flex: 1; min-width: 0; overflow: hidden; }
.scene { width: 100%; height: 100%; }

/* Dialog floating over the scene */
.dialog {
  position: absolute;
  left: 21px;
  top: 348px;
  width: 350px;
  border: 1px solid #444;
  background: #f0f0f0;
  box-shadow: 0 4px 16px rgba(0, 0, 0, .5);
  color: #111;
  font: 12px/16px "Noto Sans CJK KR", sans-serif;
}
.dialog-head {
  display: flex;
  align-items: center;
  justify-content: space-between;
  height: 30px;
  padding: 0 9px 2px;
  background: #fff;
}
.dialog-head h1 { margin: 0; font: 13px/18px "Noto Sans CJK KR", sans-serif; }
.dialog-body { padding: 15px 9px 9px 6px; }
.picks { display: flex; align-items: flex-start; gap: 34px; }
.modes { display: flex; flex-direction: column; gap: 5px; padding: 5px 7px 6px 6px; border: 1px solid #dcdcdc; }
.selectors { display: flex; flex-direction: column; gap: 6px; padding-top: 5px; }
.line { display: flex; align-items: center; gap: 8px; }
.pick {
  display: flex;
  flex-direction: column;
  align-items: center;
  justify-content: center;
  width: 30px;
  height: 22px;
  border: 1px solid #adadad;
  background: #e1e1e1;
}
.modes .pick, .pick.flip { width: 28px; }
.pick.current { border-color: #0a5a9c; background: #cce4f7; }
.pick.focus { border: 2px solid #1f6fb0; }
.pick.flip { margin: 0 4px 0 -3px; }
.pick.off { background: #cacaca; color: #999; }
.pick i { width: 16px; height: 2px; background: #1a35e0; }
.pick.off i { background: #a8148c; }

fieldset {
  display: flex;
  align-items: center;
  height: 52px;
  margin: 15px 0 0;
  padding: 0 0 6px 7px;
  border: 1px solid #dcdcdc;
}
legend { padding: 0; }
.field { display: flex; height: 18px; margin-left: 9px; border: 1px solid #777; background: #fff; }
.field input { flex: 1; min-width: 0; padding: 0 3px; border: 0; background: none; color: #111; font: 12px/16px "Open Sans", sans-serif; outline: 0; }
.field button { display: flex; align-items: center; justify-content: center; width: 13px; background: #f0f0f0; }
.count { width: 89px; border-color: #1f6fb0; }
/* insertion point after the digit */
.count input { background: linear-gradient(#000, #000) 10px 2px / 1px 12px no-repeat; }
.degrees { width: 102px; margin-left: 6px; }
.angle { margin-left: 9px; }
.mid { display: flex; align-items: center; gap: 4px; margin-left: 24px; }
.mid input { appearance: none; width: 13px; height: 13px; margin: 0; border: 1px solid #333; background: #fff; }

.actions { display: flex; gap: 10px; margin-top: 8px; padding: 0 2px 0 6px; }
.actions button { height: 20px; border: 1px solid #adadad; background: #e1e1e1; }
.actions .help { display: flex; align-items: center; justify-content: center; width: 26px; margin-right: auto; }
.cmd { width: 86px; }
.expand { width: 28px; }

/* Highlight frames drawn over the steps to follow */
.mark { position: absolute; border: 6px solid #ee1c24; }
.mark-count { left: 8px; top: 140px; width: 80px; height: 60px; }
.mark-ok { left: 104px; top: 193px; width: 109px; height: 38px; }
```
